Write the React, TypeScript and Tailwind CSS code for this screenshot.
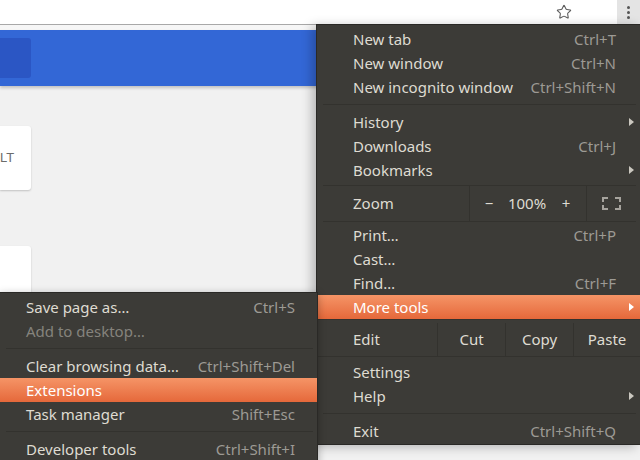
import { Star } from "lucide-react";

type Item = { label: string; shortcut?: string; arrow?: boolean; active?: boolean; disabled?: boolean };

const Arrow = ({ light }: { light?: boolean }) => (
    <svg width="5" height="8" viewBox="0 0 5 8" className="absolute right-[6px] top-1/2 -translate-y-1/2">
        <path d="M0 0 L5 4 L0 8 Z" fill={light ? "#ffffff" : "#cbc8c0"} />
    </svg>
);

function MenuRow({ item, pl, pr }: { item: Item; pl: string; pr: string }) {
    return (
        <div
            className={`relative flex h-[24px] items-center justify-between ${pl} ${pr} ${item.active
                ? "bg-gradient-to-b from-[#f59466] to-[#e5683a] text-white"
                : item.disabled
                    ? "text-[#85837d]"
                    : "text-[#dfdbd2]"
                }`}
        >
            <span>{item.label}</span>
            {item.shortcut && (
                <span className={item.active ? "text-white" : "text-[#9d9a94]"}>{item.shortcut}</span>
            )}
            {item.arrow && <Arrow light={item.active} />}
        </div>
    );
}

const Sep = () => (
    <div className="py-[5px] pl-[6px] pr-[4px]">
        <div className="h-px bg-[#33322e]" />
    </div>
);

export default function App() {
    const group1: Item[] = [
        { label: "New tab", shortcut: "Ctrl+T" },
        { label: "New window", shortcut: "Ctrl+N" },
        { label: "New incognito window", shortcut: "Ctrl+Shift+N" },
    ];
    const group2: Item[] = [
        { label: "History", arrow: true },
        { label: "Downloads", shortcut: "Ctrl+J" },
        { label: "Bookmarks", arrow: true },
    ];
    const group3: Item[] = [
        { label: "Print…", shortcut: "Ctrl+P" },
        { label: "Cast…" },
        { label: "Find…", shortcut: "Ctrl+F" },
        { label: "More tools", arrow: true, active: true },
    ];
    const group4: Item[] = [
        { label: "Settings" },
        { label: "Help", arrow: true },
    ];

    const sub1: Item[] = [
        { label: "Save page as…", shortcut: "Ctrl+S" },
        { label: "Add to desktop…", disabled: true },
    ];
    const sub2: Item[] = [
        { label: "Clear browsing data…", shortcut: "Ctrl+Shift+Del" },
        { label: "Extensions", active: true },
        { label: "Task manager", shortcut: "Shift+Esc" },
    ];

    return (
        <div className="relative h-[460px] w-[640px] overflow-hidden bg-[#f1f1f1] font-['Noto_Sans',sans-serif] text-[15px]">
            {/* Toolbar */}
            <div className="flex h-[25px] items-stretch justify-end border-b border-[#a8a8a8] bg-white">
                <div className="flex items-center pr-[45px]">
                    <Star size={16} strokeWidth={1.6} color="#5c5c5c" />
                </div>
                <div className="flex w-[23px] flex-col items-center justify-center gap-[2px] bg-[#e4e4e4]">
                    <span className="h-[3px] w-[3px] rounded-full bg-[#555]" />
                    <span className="h-[3px] w-[3px] rounded-full bg-[#555]" />
                    <span className="h-[3px] w-[3px] rounded-full bg-[#555]" />
                </div>
            </div>
            <div className="h-[5px] bg-[#f6f6f6]" />

            {/* Blue header */}
            <div className="flex h-[56px] items-center bg-[#3367d6] shadow-[0_2px_3px_rgba(0,0,0,0.2)]">
                <div className="h-[40px] w-[31px] rounded-r-[3px] bg-[#2b56c4]" />
            </div>

            {/* Cards */}
            <div className="mt-[40px] flex h-[64px] w-[31px] items-center rounded-r-[3px] bg-white font-['Liberation_Sans',sans-serif] text-[13px] text-[#6b6b6b] shadow-[0_1px_2px_rgba(0,0,0,0.2)]">
                LT
            </div>
            <div className="mt-[56px] h-[80px] w-[31px] rounded-r-[3px] bg-white shadow-[0_1px_2px_rgba(0,0,0,0.2)]" />

            {/* Main menu */}
            <div className="absolute left-[316px] top-[24px] w-[324px] border border-r-0 border-[#2a2926] bg-[#3c3b37] pt-[2px] pb-px shadow-[-4px_2px_10px_rgba(0,0,0,0.25)]">
                {group1.map((it) => (
                    <MenuRow key={it.label} item={it} pl="pl-[36px]" pr="pr-[24px]" />
                ))}
                <Sep />
                {group2.map((it) => (
                    <MenuRow key={it.label} item={it} pl="pl-[36px]" pr="pr-[24px]" />
                ))}
                <div className="pt-[3px] pb-px pl-[6px] pr-[4px]">
                    <div className="flex h-[37px] border-y border-[#33322e] text-[#dfdbd2]">
                        <div className="flex w-[146px] items-center pl-[30px]">Zoom</div>
                        <div className="flex w-[118px] items-center border-x border-[#33322e]">
                            <span className="w-[38px] text-center">−</span>
                            <span className="flex-1 text-center">100%</span>
                            <span className="w-[40px] text-center">+</span>
                        </div>
                        <div className="flex flex-1 items-center justify-center">
                            <svg width="19" height="13" viewBox="0 0 19 13" fill="none" stroke="#a6a39d" strokeWidth="2">
                                <path d="M1 5 V1 H6 M13 1 H18 V5 M18 8 V12 H13 M6 12 H1 V8" />
                            </svg>
                        </div>
                    </div>
                </div>
                {group3.map((it) => (
                    <MenuRow key={it.label} item={it} pl="pl-[36px]" pr="pr-[24px]" />
                ))}
                <div className="flex h-[38px] border-y border-[#33322e] pt-[3px] text-[#dfdbd2]">
                    <div className="flex w-[120px] items-center pl-[36px]">Edit</div>
                    <div className="flex w-[68px] items-center justify-center border-l border-[#33322e]">Cut</div>
                    <div className="flex w-[68px] items-center justify-center border-l border-[#33322e]">Copy</div>
                    <div className="flex flex-1 items-center justify-center border-l border-[#33322e]">Paste</div>
                </div>
                <div className="h-[3px]" />
                {group4.map((it) => (
                    <MenuRow key={it.label} item={it} pl="pl-[36px]" pr="pr-[24px]" />
                ))}
                <Sep />
                <MenuRow item={{ label: "Exit", shortcut: "Ctrl+Shift+Q" }} pl="pl-[36px]" pr="pr-[24px]" />
            </div>

            {/* More tools submenu */}
            <div className="absolute left-0 top-[292px] w-[318px] border-t border-r border-[#2a2926] bg-[#3c3b37] pt-[2px] pb-[20px] shadow-[0_2px_8px_rgba(0,0,0,0.3)]">
                {sub1.map((it) => (
                    <MenuRow key={it.label} item={it} pl="pl-[26px]" pr="pr-[22px]" />
                ))}
                <Sep />
                {sub2.map((it) => (
                    <MenuRow key={it.label} item={it} pl="pl-[26px]" pr="pr-[22px]" />
                ))}
                <Sep />
                <MenuRow item={{ label: "Developer tools", shortcut: "Ctrl+Shift+I" }} pl="pl-[26px]" pr="pr-[22px]" />
            </div>
        </div>
    );
}
